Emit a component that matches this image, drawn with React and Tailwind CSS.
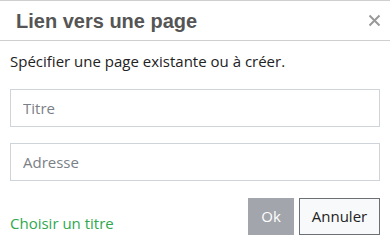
import React from 'react';

export default function App() {
  return (
    <div className="w-[390px] h-[245px] bg-white border-t border-[#cfcfcf] font-['Open_Sans',sans-serif]">
      <div className="h-[40px] flex items-center justify-between pl-4 pr-[5px] border-b border-[#cfcfcf]">
        <h2 className="font-['Liberation_Sans',Arial,sans-serif] font-bold text-[20px] text-[#555]">
          Lien vers une page
        </h2>
        <button className="text-[#999] p-1" aria-label="Fermer">
          <svg width="13" height="13" viewBox="0 0 13 13">
            <path d="M1.5 1.5L11.5 11.5M11.5 1.5L1.5 11.5" stroke="currentColor" strokeWidth="2" />
          </svg>
        </button>
      </div>
      <div className="px-[10px] pt-[10px]">
        <p className="text-[15px] text-[#222] leading-[20px]">Spécifier une page existante ou à créer.</p>
        <div className="mt-[18px] flex flex-col gap-4">
          <input
            placeholder="Titre"
            className="h-[38px] w-full border border-[#ced4da] px-3 text-[15px] placeholder:text-[#7b8087] outline-none"
          />
          <input
            placeholder="Adresse"
            className="h-[38px] w-full border border-[#ced4da] px-3 text-[15px] placeholder:text-[#7b8087] outline-none"
          />
        </div>
        <div className="mt-[17px] flex items-center justify-between">
          <a href="#" className="mt-[14px] text-[15px] text-[#2fa84f]">Choisir un titre</a>
          <div className="flex gap-[5px]">
            <button className="h-[37px] w-[46px] bg-[#a2a5ab] text-white text-[15px]">Ok</button>
            <button className="h-[37px] w-[81px] bg-[#f8f9fa] border border-[#6c6f74] text-[#222] text-[15px]">Annuler</button>
          </div>
        </div>
      </div>
    </div>
  );
}
